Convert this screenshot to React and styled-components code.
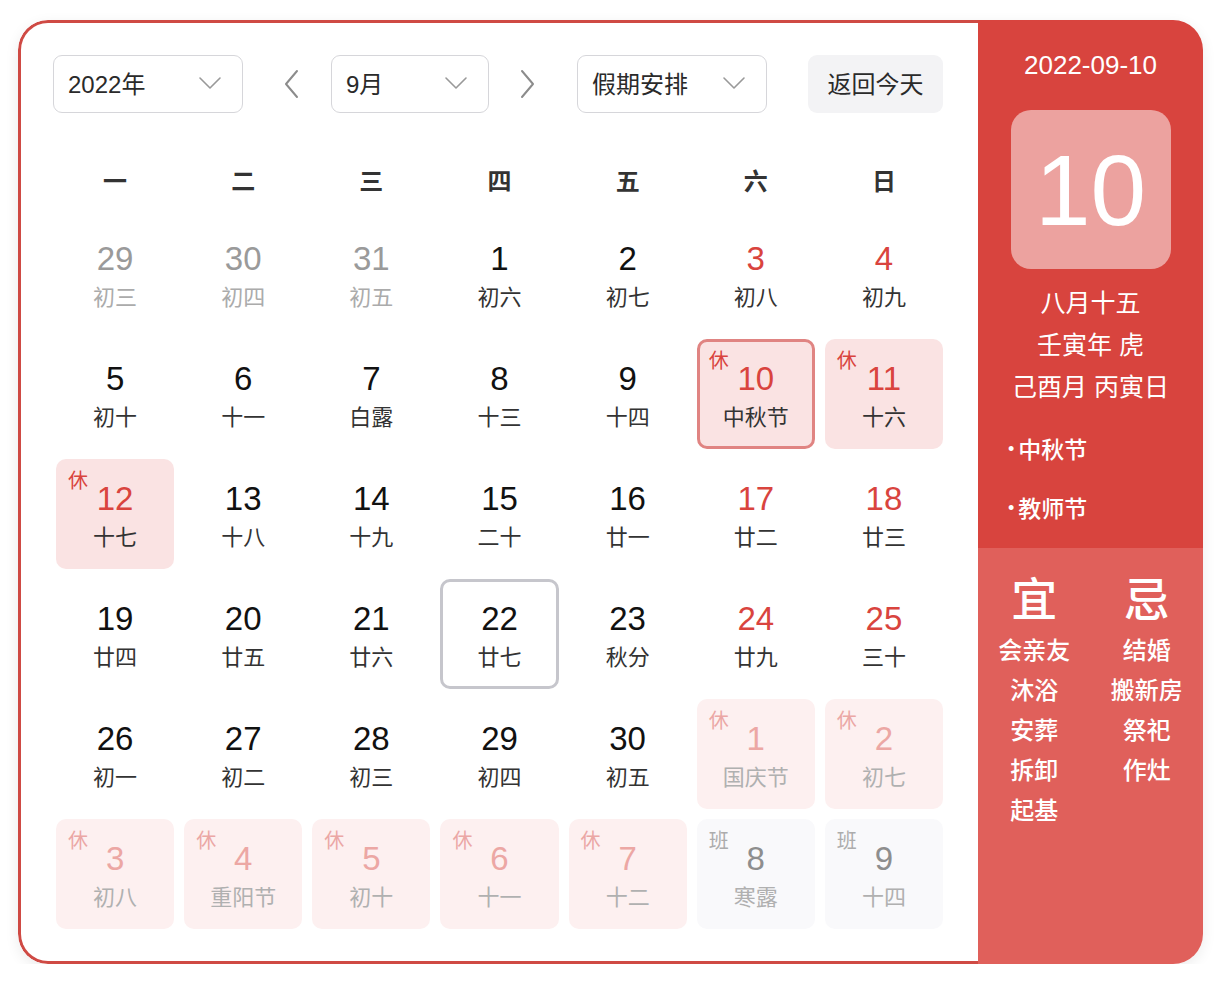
import React from "react";
import styled, { createGlobalStyle, css } from "styled-components";

const GlobalStyle = createGlobalStyle`
  html, body { margin: 0; padding: 0; background: #fff; }
  body {
    font-family: "Liberation Sans", "Noto Sans CJK SC", sans-serif;
    color: #222;
  }
  * { box-sizing: border-box; }
`;

const Page = styled.div`
  padding: 20px 0 0 18px;
`;

const Card = styled.div`
  width: 1185px;
  height: 944px;
  display: flex;
  border-radius: 30px;
  overflow: hidden;
  box-shadow: 0 4px 14px rgba(0, 0, 0, 0.08);
`;

const Main = styled.section`
  flex: 1;
  border: 3px solid #cf4a44;
  border-right: none;
  border-radius: 30px 0 0 30px;
  padding: 32px 35px 0 35px;
  background: #fff;
  display: flex;
  flex-direction: column;
`;

const Toolbar = styled.div`
  display: flex;
  align-items: center;
  height: 58px;
  margin-left: -3px;
`;

const Select = styled.div`
  width: ${(p) => p.$w}px;
  height: 58px;
  border: 1.5px solid #d6d6da;
  border-radius: 9px;
  display: flex;
  align-items: center;
  justify-content: space-between;
  padding: 0 20px 3px 14px;
  font-size: 24px;
  color: #2a2a2a;
`;

const ArrowBtn = styled.div`
  width: 88px;
  height: 58px;
  display: flex;
  align-items: center;
  justify-content: center;
  padding: ${(p) => (p.$side === "left" ? "0 0 0 10px" : "0 12px 0 0")};
`;

const TodayBtn = styled.div`
  margin-left: auto;
  width: 135px;
  height: 58px;
  border-radius: 9px;
  background: #f3f3f5;
  display: flex;
  align-items: center;
  justify-content: center;
  padding-bottom: 3px;
  font-size: 24px;
  color: #2a2a2a;
`;

const WeekHeader = styled.div`
  display: grid;
  grid-template-columns: repeat(7, 1fr);
  column-gap: 10px;
  margin-top: 42px;
  height: 48px;
  align-items: center;
`;

const WeekDay = styled.div`
  text-align: center;
  font-size: 24px;
  font-weight: 700;
  color: #333;
`;

const Grid = styled.div`
  margin-top: 16px;
  display: grid;
  grid-template-columns: repeat(7, 1fr);
  grid-auto-rows: 110px;
  gap: 10px;
`;

const Cell = styled.div`
  position: relative;
  border-radius: 10px;
  display: flex;
  flex-direction: column;
  align-items: center;
  padding-top: 22px;
  background: ${(p) => p.$bg || "transparent"};
  ${(p) =>
    p.$ring &&
    css`
      border: 3px solid ${p.$ring};
      padding-top: 19px;
    `}
`;

const DayNum = styled.div`
  font-size: 33px;
  line-height: 36px;
  height: 36px;
  color: ${(p) => p.$color};
`;

const Lunar = styled.div`
  margin-top: 5px;
  font-size: 22px;
  line-height: 32px;
  color: ${(p) => p.$color};
`;

const Mark = styled.span`
  position: absolute;
  top: ${(p) => (p.$ring ? 8 : 11)}px;
  left: ${(p) => (p.$ring ? 9 : 12)}px;
  font-size: 20px;
  line-height: 22px;
  color: ${(p) => p.$color};
`;

const Side = styled.aside`
  width: 225px;
  display: flex;
  flex-direction: column;
  color: #fff;
`;

const SideTop = styled.div`
  height: 528px;
  background: #d8443e;
  display: flex;
  flex-direction: column;
  align-items: center;
  padding-top: 30px;
`;

const DateLine = styled.div`
  font-size: 26px;
  line-height: 30px;
`;

const BigDay = styled.div`
  margin-top: 30px;
  width: 160px;
  height: 159px;
  border-radius: 20px;
  background: rgba(255, 255, 255, 0.5);
  display: flex;
  align-items: center;
  justify-content: center;
  font-size: 100px;
  line-height: 1;
  color: #fff;
`;

const LunarInfo = styled.div`
  margin-top: 13px;
  text-align: center;
  font-size: 25px;
  line-height: 42px;
`;

const Festivals = styled.ul`
  align-self: stretch;
  list-style: none;
  margin: 26px 0 0;
  padding: 0 0 0 30px;
  display: flex;
  flex-direction: column;
  gap: 28px;
`;

const Festival = styled.li`
  font-size: 23px;
  line-height: 30px;
  font-weight: 500;
  &::before {
    content: "•";
    margin-right: 4px;
    font-size: 18px;
    vertical-align: 3px;
  }
`;

const SideBottom = styled.div`
  flex: 1;
  background: #e0605b;
  display: grid;
  grid-template-columns: 1fr 1fr;
  align-items: start;
  padding-top: 24px;
`;

const YiJi = styled.div`
  display: flex;
  flex-direction: column;
  align-items: center;
`;

const YiJiTitle = styled.div`
  font-size: 46px;
  line-height: 56px;
  font-weight: 500;
  margin-bottom: 3px;
`;

const YiJiItem = styled.div`
  font-size: 24px;
  line-height: 40px;
  font-weight: 500;
`;

const Chevron = ({ dir = "down", color = "#999", size = 24 }) => {
  if (dir === "down")
    return (
      <svg width={size} height={size} viewBox="0 0 24 24" fill="none">
        <path d="M2 7l10 10L22 7" stroke={color} strokeWidth="1.6" strokeLinecap="round" strokeLinejoin="round" />
      </svg>
    );
  const d = dir === "left" ? "M15 2L4 15l11 13" : "M5 2l11 13L5 28";
  return (
    <svg width="20" height="30" viewBox="0 0 20 30" fill="none">
      <path d={d} stroke="#8c8c8c" strokeWidth="2" strokeLinecap="round" strokeLinejoin="round" />
    </svg>
  );
};

const RED = "#d9443e";

const weekDays = ["一", "二", "三", "四", "五", "六", "日"];

const days = [
  { d: 29, l: "初三", t: "prev" },
  { d: 30, l: "初四", t: "prev" },
  { d: 31, l: "初五", t: "prev" },
  { d: 1, l: "初六" },
  { d: 2, l: "初七" },
  { d: 3, l: "初八", w: 1 },
  { d: 4, l: "初九", w: 1 },
  { d: 5, l: "初十" },
  { d: 6, l: "十一" },
  { d: 7, l: "白露" },
  { d: 8, l: "十三" },
  { d: 9, l: "十四" },
  { d: 10, l: "中秋节", w: 1, m: "休", sel: 1 },
  { d: 11, l: "十六", w: 1, m: "休" },
  { d: 12, l: "十七", w: 1, m: "休" },
  { d: 13, l: "十八" },
  { d: 14, l: "十九" },
  { d: 15, l: "二十" },
  { d: 16, l: "廿一" },
  { d: 17, l: "廿二", w: 1 },
  { d: 18, l: "廿三", w: 1 },
  { d: 19, l: "廿四" },
  { d: 20, l: "廿五" },
  { d: 21, l: "廿六" },
  { d: 22, l: "廿七", today: 1 },
  { d: 23, l: "秋分" },
  { d: 24, l: "廿九", w: 1 },
  { d: 25, l: "三十", w: 1 },
  { d: 26, l: "初一" },
  { d: 27, l: "初二" },
  { d: 28, l: "初三" },
  { d: 29, l: "初四" },
  { d: 30, l: "初五" },
  { d: 1, l: "国庆节", t: "next", m: "休" },
  { d: 2, l: "初七", t: "next", m: "休" },
  { d: 3, l: "初八", t: "next", m: "休" },
  { d: 4, l: "重阳节", t: "next", m: "休" },
  { d: 5, l: "初十", t: "next", m: "休" },
  { d: 6, l: "十一", t: "next", m: "休" },
  { d: 7, l: "十二", t: "next", m: "休" },
  { d: 8, l: "寒露", t: "next", m: "班" },
  { d: 9, l: "十四", t: "next", m: "班" },
];

function styleFor(c) {
  if (c.t === "prev") return { num: "#9a9a9a", lunar: "#ababab" };
  if (c.t === "next") {
    if (c.m === "班") return { num: "#8e8e8e", lunar: "#b0b0b0", bg: "#f9f9fb", mark: "#acacac" };
    return { num: "#eca7a4", lunar: "#b0b0b0", bg: "#fdf0f0", mark: "#eba7a5" };
  }
  const s = { num: c.w || c.m === "休" ? RED : "#111", lunar: "#333" };
  if (c.m === "休") {
    s.bg = "#fae3e3";
    s.mark = RED;
  }
  if (c.sel) s.ring = "#e08482";
  if (c.today) s.ring = "#c6c6cc";
  return s;
}

const yi = ["会亲友", "沐浴", "安葬", "拆卸", "起基"];
const ji = ["结婚", "搬新房", "祭祀", "作灶"];

export default function App() {
  return (
    <>
      <GlobalStyle />
      <Page>
        <Card>
          <Main>
            <Toolbar>
              <Select $w={190}>
                <span>2022年</span>
                <Chevron />
              </Select>
              <ArrowBtn $side="left">
                <Chevron dir="left" />
              </ArrowBtn>
              <Select $w={158}>
                <span>9月</span>
                <Chevron />
              </Select>
              <ArrowBtn $side="right">
                <Chevron dir="right" />
              </ArrowBtn>
              <Select $w={190}>
                <span>假期安排</span>
                <Chevron />
              </Select>
              <TodayBtn>返回今天</TodayBtn>
            </Toolbar>
            <WeekHeader>
              {weekDays.map((w) => (
                <WeekDay key={w}>{w}</WeekDay>
              ))}
            </WeekHeader>
            <Grid>
              {days.map((c, i) => {
                const s = styleFor(c);
                return (
                  <Cell key={i} $bg={s.bg} $ring={s.ring}>
                    {c.m && (
                      <Mark $color={s.mark} $ring={!!s.ring}>
                        {c.m}
                      </Mark>
                    )}
                    <DayNum $color={s.num}>{c.d}</DayNum>
                    <Lunar $color={s.lunar}>{c.l}</Lunar>
                  </Cell>
                );
              })}
            </Grid>
          </Main>
          <Side>
            <SideTop>
              <DateLine>2022-09-10</DateLine>
              <BigDay>10</BigDay>
              <LunarInfo>
                <div>八月十五</div>
                <div>壬寅年 虎</div>
                <div>己酉月 丙寅日</div>
              </LunarInfo>
              <Festivals>
                <Festival>中秋节</Festival>
                <Festival>教师节</Festival>
              </Festivals>
            </SideTop>
            <SideBottom>
              <YiJi>
                <YiJiTitle>宜</YiJiTitle>
                {yi.map((x) => (
                  <YiJiItem key={x}>{x}</YiJiItem>
                ))}
              </YiJi>
              <YiJi>
                <YiJiTitle>忌</YiJiTitle>
                {ji.map((x) => (
                  <YiJiItem key={x}>{x}</YiJiItem>
                ))}
              </YiJi>
            </SideBottom>
          </Side>
        </Card>
      </Page>
    </>
  );
}
